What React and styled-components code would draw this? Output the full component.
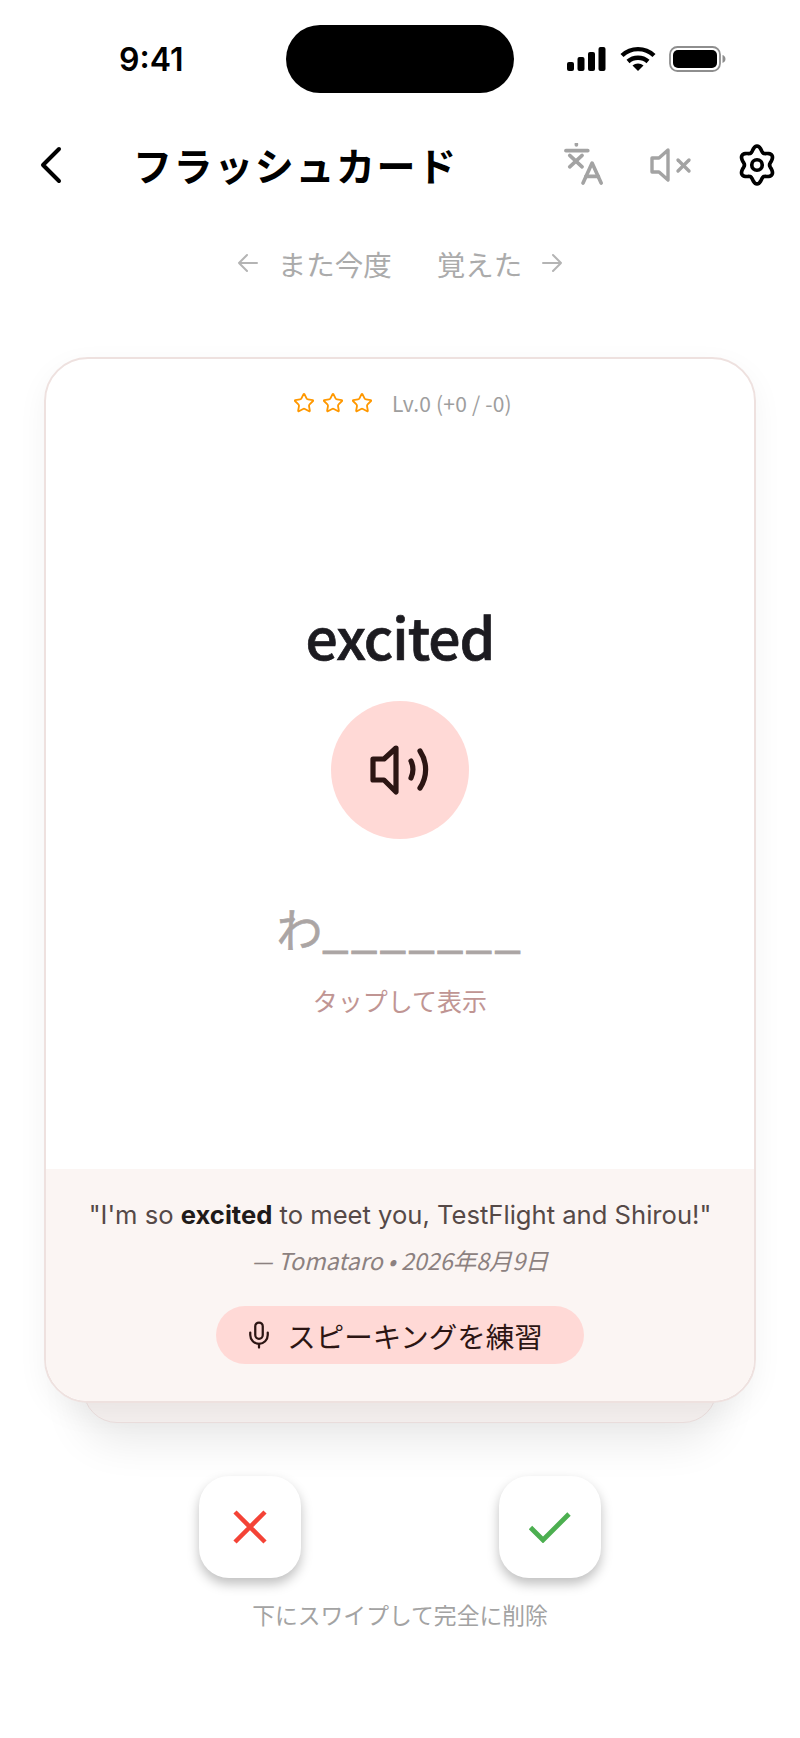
import React from "react";
import styled, { createGlobalStyle } from "styled-components";
import { Star, Mic } from "lucide-react";

const GlobalStyle = createGlobalStyle`
  html, body { margin: 0; padding: 0; background: #fff; }
  * { box-sizing: border-box; }
`;

const jp = `"Noto Sans CJK JP", "Noto Sans", sans-serif`;

const Page = styled.div`
  width: 800px;
  height: 1738px;
  background: #fff;
  font-family: ${jp};
  display: flex;
  flex-direction: column;
  overflow: hidden;
`;

const StatusBar = styled.div`
  height: 117px;
  padding: 25px 0 0 119px;
  display: flex;
  align-items: flex-start;
`;

const Clock = styled.span`
  font-family: Inter, sans-serif;
  font-size: 32px;
  line-height: 69px;
  font-weight: 600;
  color: #000;
  width: 64px;
`;

const Island = styled.div`
  margin-left: 103px;
  width: 228px;
  height: 68px;
  border-radius: 34px;
  background: #000;
`;

const StatusIcons = styled.div`
  margin-left: 53px;
  height: 67px;
  display: flex;
  align-items: center;
  gap: 13px;
`;

const Header = styled.header`
  height: 96px;
  padding: 0 24px 0 38px;
  display: flex;
  align-items: center;
`;

const Title = styled.h1`
  margin: -2px 0 0 67px;
  flex: 1;
  font-size: 39px;
  font-weight: 700;
  letter-spacing: 1.6px;
  color: #000;
`;

const IconRow = styled.div`
  display: flex;
  align-items: center;
  gap: 44px;
`;

const TranslateSlot = styled.div`
  margin-right: 2px;
  margin-top: -2px;
  display: flex;
`;

const GearSlot = styled.div`
  margin-right: -2px;
  display: flex;
`;

const HintRow = styled.div`
  margin-top: 25px;
  height: 50px;
  display: flex;
  align-items: center;
  justify-content: center;
  font-size: 28.5px;
  color: #ababab;
`;

const HintLabel = styled.span`
  margin: 0 ${(p) => (p.$side === "left" ? "45px" : "19px")} 0 ${(p) => (p.$side === "left" ? "19px" : "0")};
`;

const Stack = styled.div`
  position: relative;
  margin: 69px 44px 0;
  height: 1046px;
`;

const BackCard = styled.div`
  position: absolute;
  left: 39px;
  right: 39px;
  bottom: -20px;
  height: 120px;
  border: 1.5px solid #ecdfde;
  border-radius: 0 0 34px 34px;
  background: #f5f0ef;
  box-shadow: 0 18px 44px rgba(0, 0, 0, 0.09);
`;

const Card = styled.section`
  position: relative;
  height: 100%;
  display: flex;
  flex-direction: column;
  border: 2px solid #eee1df;
  border-radius: 44px;
  background: #fff;
  overflow: hidden;
  box-shadow: 0 10px 30px rgba(0, 0, 0, 0.05);
`;

const CardBody = styled.div`
  flex: 1;
  display: flex;
  flex-direction: column;
  align-items: center;
`;

const LevelRow = styled.div`
  margin: 30px 0 0 5px;
  height: 28px;
  display: flex;
  align-items: center;
  gap: 7px;
`;

const LevelText = styled.span`
  margin-left: 12px;
  font-size: 21px;
  line-height: 28px;
  letter-spacing: 0.2px;
  color: #9e9e9e;
`;

const Word = styled.h2`
  margin: 173px 0 0;
  font-size: 57px;
  line-height: 90px;
  font-weight: 500;
  letter-spacing: -1px;
  color: #1c1b20;
  -webkit-text-stroke: 0.7px #1c1b20;
`;

const SpeakButton = styled.div`
  margin-top: 21px;
  width: 138px;
  height: 138px;
  border-radius: 50%;
  background: #ffd9d6;
  display: flex;
  align-items: center;
  justify-content: center;
`;

const Masked = styled.div`
  margin-top: 46px;
  font-size: 46px;
  line-height: 84px;
  color: #aba5a4;
  -webkit-text-stroke: 0.6px #aba5a4;
`;

const Blanks = styled.span`
  letter-spacing: 3px;
  -webkit-text-stroke: 1.2px #aba5a4;
`;

const Reveal = styled.div`
  margin-top: 14px;
  font-size: 25px;
  line-height: 34px;
  color: #c09593;
`;

const Footer = styled.div`
  height: 232px;
  padding-top: 28px;
  background: #fbf5f3;
  display: flex;
  flex-direction: column;
  align-items: center;
`;

const Quote = styled.p`
  margin: 0;
  font-family: Inter, sans-serif;
  font-size: 25.6px;
  line-height: 36px;
  color: #554947;
  b { font-weight: 700; color: #201a19; }
`;

const Credit = styled.p`
  margin: 11px 0 0;
  font-size: 23.3px;
  line-height: 32px;
  font-style: italic;
  color: #8c8180;
`;

const SpeakPill = styled.div`
  margin-top: 30px;
  width: 368px;
  height: 58px;
  padding-right: 13px;
  border-radius: 29px;
  background: #ffd9d6;
  display: flex;
  align-items: center;
  justify-content: center;
  gap: 13px;
  font-size: 28.5px;
  color: #2c1513;
`;

const Actions = styled.div`
  margin-top: 73px;
  display: flex;
  justify-content: center;
  gap: 198px;
`;

const ActionButton = styled.div`
  width: 102px;
  height: 102px;
  border-radius: 30px;
  background: #fff;
  display: flex;
  align-items: center;
  justify-content: center;
  box-shadow: 0 6px 12px rgba(0, 0, 0, 0.25);
`;

const Caption = styled.div`
  margin-top: 20px;
  text-align: center;
  font-size: 22.8px;
  line-height: 34px;
  color: #a3a3a3;
`;

// six-lobed gear outline
const gearPath = (() => {
  const pts = [];
  for (let i = 0; i < 120; i++) {
    const a = (i / 120) * Math.PI * 2;
    const r = 9.3 + 1.5 * Math.cos(6 * a);
    const x = 12 + r * Math.sin(a) * 0.92;
    const y = 12 - r * Math.cos(a);
    pts.push(`${x.toFixed(2)} ${y.toFixed(2)}`);
  }
  return "M" + pts.join("L") + "Z";
})();

const Signal = () => (
  <svg width="40" height="24" viewBox="0 0 40 24" fill="#000">
    <rect x="0" y="15" width="7" height="9" rx="2" />
    <rect x="10.5" y="10" width="7" height="14" rx="2" />
    <rect x="21" y="5" width="7" height="19" rx="2" />
    <rect x="31.5" y="0" width="7" height="24" rx="2" />
  </svg>
);

const Wifi = () => (
  <svg width="36" height="26" viewBox="0 0 36 26" fill="none" stroke="#000" strokeWidth="4.4">
    <path d="M2 9.5C11 1 25 1 34 9.5" />
    <path d="M8 15.5C13.5 10.5 22.5 10.5 28 15.5" />
    <path d="M18 25l-5.5-5.5c3-2.7 8-2.7 11 0z" fill="#000" stroke="none" />
  </svg>
);

const Battery = () => (
  <svg width="57" height="26" viewBox="0 0 57 26">
    <rect x="1" y="1" width="50" height="24" rx="7.5" fill="none" stroke="#8e8e8e" strokeWidth="1.8" />
    <rect x="4" y="4" width="44" height="18" rx="5" fill="#000" />
    <path d="M53.5 9v8c1.8-.6 3-2.2 3-4s-1.2-3.4-3-4z" fill="#8e8e8e" />
  </svg>
);

const Chevron = () => (
  <svg width="28" height="40" viewBox="0 0 28 40" fill="none" stroke="#000" strokeWidth="4" strokeLinecap="round" strokeLinejoin="round">
    <path d="M21 4L5 20l16 16" />
  </svg>
);

const Translate = () => (
  <svg width="40" height="42" viewBox="0 0 42 44" fill="none" stroke="#a3a3a3" strokeWidth="3.8" strokeLinecap="round" strokeLinejoin="round">
    <path d="M2 8h23" />
    <path d="M13 1v1" />
    <path d="M6 13l13 12" />
    <path d="M19 13L6 25" />
    <path d="M20 42l9.5-21L39 42" />
    <path d="M23 35h13" />
  </svg>
);

const Muted = () => (
  <svg width="42" height="36" viewBox="0 0 42 36" fill="none" stroke="#a3a3a3" strokeWidth="3.4" strokeLinecap="round" strokeLinejoin="round">
    <path d="M18 3L9 11H2v14h7l9 8z" />
    <path d="M28 13l11 11" />
    <path d="M39 13L28 24" />
  </svg>
);

const Gear = () => (
  <svg width="42" height="42" viewBox="0 0 24 24" fill="none" stroke="#000" strokeWidth="2.1" strokeLinejoin="round">
    <path d={gearPath} />
    <circle cx="12" cy="12" r="3" />
  </svg>
);

const ArrowLeft = () => (
  <svg width="22" height="20" viewBox="0 0 22 20" fill="none" stroke="#b4b4b4" strokeWidth="2" strokeLinecap="round" strokeLinejoin="round">
    <path d="M10 2L2 10l8 8M2 10h18" />
  </svg>
);

const ArrowRight = () => (
  <svg width="22" height="20" viewBox="0 0 22 20" fill="none" stroke="#b4b4b4" strokeWidth="2" strokeLinecap="round" strokeLinejoin="round">
    <path d="M12 2l8 8-8 8M20 10H2" />
  </svg>
);

const Speaker = () => (
  <svg width="60" height="50" viewBox="0 0 60 50" fill="none" stroke="#2c1513" strokeWidth="5.2" strokeLinecap="round" strokeLinejoin="round">
    <path d="M26 3L14 14H3v21h11l12 12z" />
    <path d="M41 16c2.5 5.5 2.5 11.5 0 17" />
    <path d="M50 6c7.5 11.5 7.5 25.5 0 37" />
  </svg>
);

const Cross = () => (
  <svg width="34" height="34" viewBox="0 0 34 34" stroke="#f44336" strokeWidth="4.5">
    <path d="M2 2l30 30M32 2L2 32" />
  </svg>
);

const Check = () => (
  <svg width="42" height="32" viewBox="0 0 42 32" fill="none" stroke="#4caf50" strokeWidth="4.8">
    <path d="M1.5 16.5l12.5 12.5L40 3" />
  </svg>
);

export default function App() {
  return (
    <Page>
      <GlobalStyle />
      <StatusBar>
        <Clock>9:41</Clock>
        <Island />
        <StatusIcons>
          <Signal />
          <Wifi />
          <Battery />
        </StatusIcons>
      </StatusBar>
      <Header>
        <Chevron />
        <Title>フラッシュカード</Title>
        <IconRow>
          <TranslateSlot>
            <Translate />
          </TranslateSlot>
          <Muted />
          <GearSlot>
            <Gear />
          </GearSlot>
        </IconRow>
      </Header>
      <HintRow>
        <ArrowLeft />
        <HintLabel $side="left">また今度</HintLabel>
        <HintLabel $side="right">覚えた</HintLabel>
        <ArrowRight />
      </HintRow>
      <Stack>
        <BackCard />
        <Card>
          <CardBody>
            <LevelRow>
              <Star size={22} color="#ff9800" strokeWidth={2} />
              <Star size={22} color="#ff9800" strokeWidth={2} />
              <Star size={22} color="#ff9800" strokeWidth={2} />
              <LevelText>Lv.0 (+0 / -0)</LevelText>
            </LevelRow>
            <Word>excited</Word>
            <SpeakButton>
              <Speaker />
            </SpeakButton>
            <Masked>
              わ<Blanks>_______</Blanks>
            </Masked>
            <Reveal>タップして表示</Reveal>
          </CardBody>
          <Footer>
            <Quote>
              "I'm so <b>excited</b> to meet you, TestFlight and Shirou!"
            </Quote>
            <Credit>— Tomataro • 2026年8月9日</Credit>
            <SpeakPill>
              <Mic size={30} color="#2c1513" strokeWidth={1.8} />
              スピーキングを練習
            </SpeakPill>
          </Footer>
        </Card>
      </Stack>
      <Actions>
        <ActionButton>
          <Cross />
        </ActionButton>
        <ActionButton>
          <Check />
        </ActionButton>
      </Actions>
      <Caption>下にスワイプして完全に削除</Caption>
    </Page>
  );
}
